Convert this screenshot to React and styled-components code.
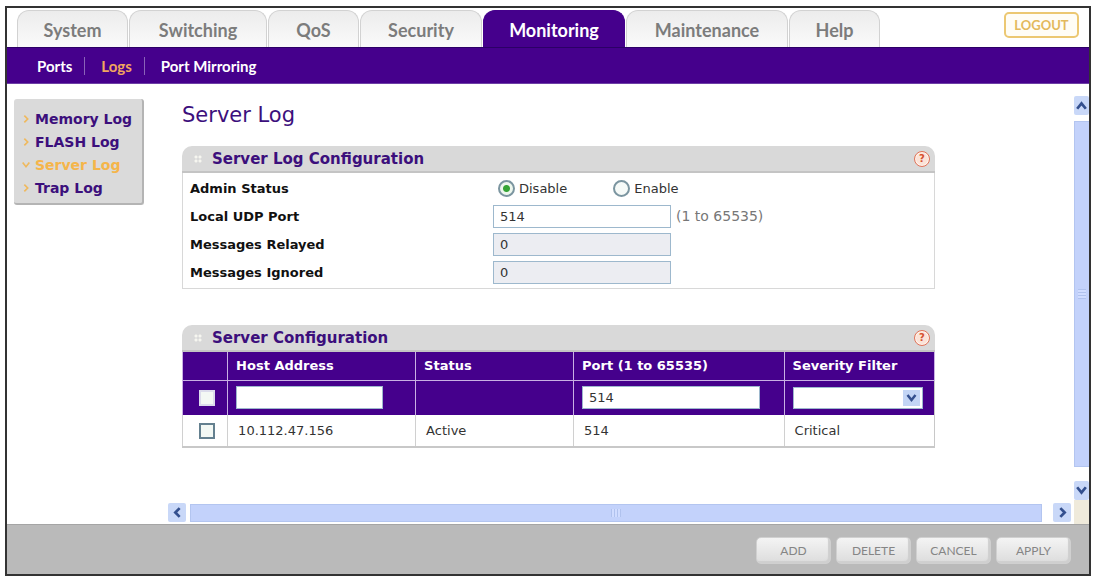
import React, {useState} from 'react';
import styled, {createGlobalStyle} from "styled-components";

const GlobalStyle = createGlobalStyle`
  * {
    box-sizing: border-box;
  }

  body {
    margin: 0;
    background: #fff;
    font-family: "DejaVu Sans", sans-serif;
    font-size: 13px;
    color: #333;
  }

  button, input, select {
    font-family: inherit;
  }
`

const Frame = styled.div`
  display: flex;
  flex-direction: column;
  min-height: calc(100vh - 6px);
  margin: 6px 4px 0 5px;
  border: 2px solid #333;
`

const Header = styled.header`
  display: flex;
  justify-content: space-between;
  align-items: flex-start;
  padding: 2px 10px 0 10px;
`

const Tabs = styled.nav`
  display: flex;
  gap: 1px;
`

const Tab = styled.a`
  width: ${props => props.$width}px;
  height: 37px;
  border: 1px solid ${props => props.$active ? '#45008c' : '#d2d2d2'};
  border-bottom: none;
  border-radius: 12px 12px 0 0;
  background: ${props => props.$active ? '#45008c' : 'linear-gradient(#ececec, #fafafa)'};
  color: ${props => props.$active ? '#fff' : '#7c7c7c'};
  font-family: Lato, sans-serif;
  font-size: 18px;
  font-weight: bold;
  line-height: 38px;
  text-align: center;
  text-decoration: none;
`

const Logout = styled.button`
  width: 75px;
  height: 26px;
  margin-top: 2px;
  padding: 0;
  border: 2px solid #ecc873;
  border-radius: 5px;
  background: #fffdf6;
  color: #e3b95c;
  font-family: Lato, sans-serif;
  font-size: 13px;
  font-weight: bold;
`

const SubNav = styled.nav`
  display: flex;
  align-items: center;
  height: 37px;
  padding-left: 30px;
  border-top: 1px solid #2c0066;
  border-bottom: 1px solid #6d3fa6;
  background: #45008c;
`

const SubLink = styled.a`
  padding-right: 12px;
  color: ${props => props.$active ? '#f2a65e' : '#fff'};
  font-family: Lato, sans-serif;
  font-size: 15px;
  font-weight: bold;
  text-decoration: none;

  & + & {
    padding-left: 16px;
    border-left: 1px solid #8a63b8;
  }
`

const Body = styled.div`
  display: flex;
  flex: 1;
  padding-top: 12px;
`

const Side = styled.aside`
  flex: 0 0 161px;
  padding: 3px 0 0 7px;
`

const SideMenu = styled.nav`
  display: flex;
  flex-direction: column;
  width: 130px;
  padding: 8px 0 4px 7px;
  border-right: 2px solid #b4b4b4;
  border-bottom: 2px solid #b4b4b4;
  border-radius: 3px;
  background: #dadada;
`

const SideLink = styled.a`
  display: flex;
  align-items: center;
  gap: 4px;
  height: 23px;
  color: ${props => props.$active ? '#f5b54a' : '#3c0f7c'};
  font-size: 14px;
  font-weight: bold;
  white-space: nowrap;
  text-decoration: none;

  svg {
    width: 10px;
    height: 10px;
    flex: none;
  }
`

const ScrollArea = styled.div`
  display: flex;
  flex: 1;
  flex-direction: column;
  min-width: 0;
`

const Content = styled.main`
  flex: 1;
  padding: 0 139px 0 14px;
`

const Title = styled.h1`
  margin: 0;
  padding-bottom: 12px;
  color: #3c0f7c;
  font-size: 21px;
  font-weight: normal;
  line-height: 38px;
`

const Panel = styled.section`
  margin-bottom: 36px;
`

const PanelHead = styled.div`
  display: flex;
  align-items: center;
  height: 27px;
  padding: 0 5px 0 12px;
  border-bottom: 2px solid #c4c4c4;
  border-radius: 10px 10px 0 0;
  background: #d9d9d9;
`

const Dots = styled.span`
  width: 8px;
  height: 8px;
  margin-right: 10px;
  background: radial-gradient(circle, #f6f6f0 1px, transparent 2px) 0 0 / 4px 4px;
`

const PanelTitle = styled.h2`
  flex: 1;
  margin: 0;
  color: #3c0f7c;
  font-size: 15px;
  font-weight: bold;
`

const HelpButton = styled.button`
  width: 16px;
  height: 16px;
  padding: 0;
  border: 1px solid #e0735a;
  border-radius: 50%;
  background: #fbe3d8;
  box-shadow: inset 0 0 0 1px #fff3ec;
  color: #d6502f;
  font-size: 10px;
  font-weight: bold;
  line-height: 12px;
`

const Fields = styled.div`
  padding: 1px 0 2px 7px;
  border: 1px solid #d8d8d8;
  border-top: none;
`

const Field = styled.div`
  display: grid;
  grid-template-columns: 303px 1fr;
  align-items: center;
  height: 28px;
`

const Label = styled.label`
  color: #111;
  font-size: 13px;
  font-weight: bold;
`

const Value = styled.div`
  display: flex;
  align-items: center;
  gap: 5px;
`

const Radios = styled.div`
  display: flex;
  gap: 46px;
  padding-left: 5px;
`

const RadioLabel = styled.label`
  display: flex;
  align-items: center;
  gap: 4px;
  font-size: 13px;
`

const Radio = styled.input`
  appearance: none;
  width: 17px;
  height: 17px;
  margin: 0;
  border: 2px solid #7b95a0;
  border-radius: 50%;
  background: #f6faf8;

  &:checked {
    background: radial-gradient(circle, #35a435 3px, #eef7ee 4px);
  }
`

const Hint = styled.span`
  color: #777;
  font-size: 14px;
`

const TextInput = styled.input`
  width: ${props => props.$width || '178px'};
  height: 23px;
  padding: 0 6px;
  border: 1px solid #9db8cd;
  background: #fff;
  color: #333;
  font-size: 13px;

  &:disabled {
    background: #ecedf2;
  }
`

const Table = styled.table`
  width: 100%;
  border-collapse: collapse;
  table-layout: fixed;
  border: 1px solid #c8c8c8;
  border-top: none;
  border-bottom-width: 2px;
`

const Th = styled.th`
  height: 28px;
  padding: 0 8px;
  border: 1px solid #c9b0e4;
  border-top: none;
  background: #45008c;
  color: #fff;
  font-size: 13px;
  font-weight: bold;
  text-align: left;
  white-space: nowrap;
`

const Td = styled.td`
  height: ${props => props.$edit ? 35 : 32}px;
  padding: 0 8px;
  border-left: 1px solid ${props => props.$edit ? '#c9b0e4' : '#d0d0d0'};
  background: ${props => props.$edit ? '#45008c' : '#fff'};
  text-align: ${props => props.$center ? 'center' : 'left'};
  font-size: 13px;

  & > span {
    padding-left: 2px;
  }
`

const Checkbox = styled.input`
  appearance: none;
  display: inline-block;
  width: 16px;
  height: 16px;
  margin: 0 0 0 4px;
  border: 2px solid #64808f;
  background: #f3f8f4;
  vertical-align: middle;

  ${Td}:has(&) {
    padding: 0;
  }
`

const HeadCheckbox = styled(Checkbox)`
  border-color: #dcdcec;
`

const SelectBox = styled.div`
  position: relative;
  width: 98%;

  svg {
    position: absolute;
    top: 3px;
    right: 3px;
    width: 17px;
    height: 16px;
    padding: 2px;
    background: #c3d5f5;
    pointer-events: none;
  }
`

const Select = styled.select`
  appearance: none;
  display: block;
  width: 100%;
  height: 22px;
  padding: 0 20px 0 6px;
  border: 1px solid #9db8cd;
  border-radius: 0;
  background: #fff;
  font-size: 13px;
`

const HScroll = styled.div`
  display: flex;
  align-items: center;
  height: 21px;
  margin-bottom: 1px;
  padding-right: 3px;
`

const VScroll = styled.div`
  display: flex;
  flex: 0 0 15px;
  flex-direction: column;
`

const Arrow = styled.button`
  display: flex;
  align-items: center;
  justify-content: center;
  flex: none;
  width: ${props => props.$vertical ? '100%' : '18px'};
  height: 19px;
  padding: 0;
  border: none;
  border-radius: 2px;
  background: #c9d8f8;

  svg {
    width: 13px;
    height: 13px;
  }
`

const HThumb = styled.div`
  display: flex;
  align-items: center;
  justify-content: center;
  flex: 1;
  height: 18px;
  margin: 0 11px 0 4px;
  border: 1px solid #b3c5f0;
  background: #c3d2fb;
`

const VThumb = styled.div`
  display: flex;
  align-items: center;
  justify-content: center;
  flex: 1;
  margin: 6px 0 14px 0;
  border: 1px solid #b3c5f0;
  border-right: none;
  background: #c3d2fb;
`

const Grip = styled.span`
  width: ${props => props.$vertical ? 8 : 10}px;
  height: ${props => props.$vertical ? 10 : 8}px;
  background: repeating-linear-gradient(${props => props.$vertical ? '180deg' : '90deg'}, #b0c2ee 0 1px, #d0dcff 1px 3px);
`

const Corner = styled.div`
  height: 24px;
  background: #efeadb;
`

const Footer = styled.footer`
  display: flex;
  justify-content: flex-end;
  gap: 5px;
  height: 50px;
  padding: 12px 18px 0 0;
  border-top: 1px solid #a5a5a5;
  background: #bababa;
`

const Action = styled.button`
  width: 75px;
  height: 27px;
  padding: 0;
  border: 1px solid #d0d0d0;
  border-radius: 5px;
  background: linear-gradient(#f4f4f4, #dcdcdc);
  box-shadow: inset -2px -2px 1px #cfcfcf;
  color: #858585;
  font-family: Lato, sans-serif;
  font-size: 12px;
`

const tabs = [
    {label: 'System', width: 111},
    {label: 'Switching', width: 138},
    {label: 'QoS', width: 91},
    {label: 'Security', width: 122},
    {label: 'Monitoring', width: 142},
    {label: 'Maintenance', width: 162},
    {label: 'Help', width: 91},
]

const directions = {
    up: 'M2 9 L6 4 L10 9',
    down: 'M2 3 L6 8 L10 3',
    left: 'M8 2 L4 6 L8 10',
    right: 'M4 2 L8 6 L4 10',
}

const Chevron = ({dir, color = '#34508e', weight = 2.5}) => (
    <svg viewBox="0 0 12 12" fill="none" stroke={color} strokeWidth={weight} aria-hidden="true">
        <path d={directions[dir]}/>
    </svg>
)

const PanelHeader = ({title}) => (
    <PanelHead>
        <Dots/>
        <PanelTitle>{title}</PanelTitle>
        <HelpButton type="button">?</HelpButton>
    </PanelHead>
)

const App = () => {
    const [status, setStatus] = useState('Disable')
    const [port, setPort] = useState('514')
    const [host, setHost] = useState('')
    const [serverPort, setServerPort] = useState('514')
    const [severity, setSeverity] = useState('')

    return (
        <>
            <GlobalStyle/>
            <Frame>
                <Header>
                    <Tabs>
                        {tabs.map(item => (
                            <Tab key={item.label} href="#" $width={item.width} $active={item.label === 'Monitoring'}>
                                {item.label}
                            </Tab>
                        ))}
                    </Tabs>
                    <Logout type="button">LOGOUT</Logout>
                </Header>
                <SubNav>
                    <SubLink href="#">Ports</SubLink>
                    <SubLink href="#" $active>Logs</SubLink>
                    <SubLink href="#">Port Mirroring</SubLink>
                </SubNav>
                <Body>
                    <Side>
                        <SideMenu>
                            {['Memory Log', 'FLASH Log', 'Server Log', 'Trap Log'].map(item => {
                                const active = item === 'Server Log'
                                return (
                                    <SideLink key={item} href="#" $active={active}>
                                        <Chevron dir={active ? 'down' : 'right'} color="#efb95e" weight={2}/>
                                        {item}
                                    </SideLink>
                                )
                            })}
                        </SideMenu>
                    </Side>
                    <ScrollArea>
                        <Content>
                            <Title>Server Log</Title>
                            <Panel>
                                <PanelHeader title="Server Log Configuration"/>
                                <Fields>
                                    <Field>
                                        <Label as="span" id="admin-status">Admin Status</Label>
                                        <Radios role="radiogroup" aria-labelledby="admin-status">
                                            {['Disable', 'Enable'].map(item => (
                                                <RadioLabel key={item}>
                                                    <Radio
                                                        type="radio"
                                                        name="status"
                                                        checked={status === item}
                                                        onChange={() => setStatus(item)}
                                                    />
                                                    {item}
                                                </RadioLabel>
                                            ))}
                                        </Radios>
                                    </Field>
                                    <Field>
                                        <Label htmlFor="port">Local UDP Port</Label>
                                        <Value>
                                            <TextInput id="port" value={port} onChange={e => setPort(e.target.value)}/>
                                            <Hint>(1 to 65535)</Hint>
                                        </Value>
                                    </Field>
                                    <Field>
                                        <Label htmlFor="relayed">Messages Relayed</Label>
                                        <Value><TextInput id="relayed" value="0" disabled/></Value>
                                    </Field>
                                    <Field>
                                        <Label htmlFor="ignored">Messages Ignored</Label>
                                        <Value><TextInput id="ignored" value="0" disabled/></Value>
                                    </Field>
                                </Fields>
                            </Panel>
                            <Panel>
                                <PanelHeader title="Server Configuration"/>
                                <Table>
                                    <colgroup>
                                        <col style={{width: '6%'}}/>
                                        <col style={{width: '25%'}}/>
                                        <col style={{width: '21%'}}/>
                                        <col style={{width: '28%'}}/>
                                        <col style={{width: '20%'}}/>
                                    </colgroup>
                                    <thead>
                                        <tr>
                                            <Th/>
                                            <Th id="host">Host Address</Th>
                                            <Th>Status</Th>
                                            <Th id="server-port">Port (1 to 65535)</Th>
                                            <Th id="severity">Severity Filter</Th>
                                        </tr>
                                    </thead>
                                    <tbody>
                                        <tr>
                                            <Td $edit $center>
                                                <HeadCheckbox type="checkbox" aria-label="Select all"/>
                                            </Td>
                                            <Td $edit>
                                                <TextInput
                                                    $width="86%"
                                                    aria-labelledby="host"
                                                    value={host}
                                                    onChange={e => setHost(e.target.value)}
                                                />
                                            </Td>
                                            <Td $edit/>
                                            <Td $edit>
                                                <TextInput
                                                    $width="92%"
                                                    aria-labelledby="server-port"
                                                    value={serverPort}
                                                    onChange={e => setServerPort(e.target.value)}
                                                />
                                            </Td>
                                            <Td $edit>
                                                <SelectBox>
                                                    <Select
                                                        aria-labelledby="severity"
                                                        value={severity}
                                                        onChange={e => setSeverity(e.target.value)}
                                                    >
                                                        <option value=""></option>
                                                        <option value="Critical">Critical</option>
                                                    </Select>
                                                    <Chevron dir="down"/>
                                                </SelectBox>
                                            </Td>
                                        </tr>
                                        <tr>
                                            <Td $center>
                                                <Checkbox type="checkbox" aria-label="Select 10.112.47.156"/>
                                            </Td>
                                            <Td><span>10.112.47.156</span></Td>
                                            <Td><span>Active</span></Td>
                                            <Td><span>514</span></Td>
                                            <Td><span>Critical</span></Td>
                                        </tr>
                                    </tbody>
                                </Table>
                            </Panel>
                        </Content>
                        <HScroll>
                            <Arrow type="button" aria-label="Scroll left"><Chevron dir="left"/></Arrow>
                            <HThumb><Grip/></HThumb>
                            <Arrow type="button" aria-label="Scroll right"><Chevron dir="right"/></Arrow>
                        </HScroll>
                    </ScrollArea>
                    <VScroll>
                        <Arrow type="button" $vertical aria-label="Scroll up"><Chevron dir="up"/></Arrow>
                        <VThumb><Grip $vertical/></VThumb>
                        <Arrow type="button" $vertical aria-label="Scroll down"><Chevron dir="down"/></Arrow>
                        <Corner/>
                    </VScroll>
                </Body>
                <Footer>
                    {['ADD', 'DELETE', 'CANCEL', 'APPLY'].map(item => (
                        <Action key={item} type="button">{item}</Action>
                    ))}
                </Footer>
            </Frame>
        </>
    )
}

export default App
